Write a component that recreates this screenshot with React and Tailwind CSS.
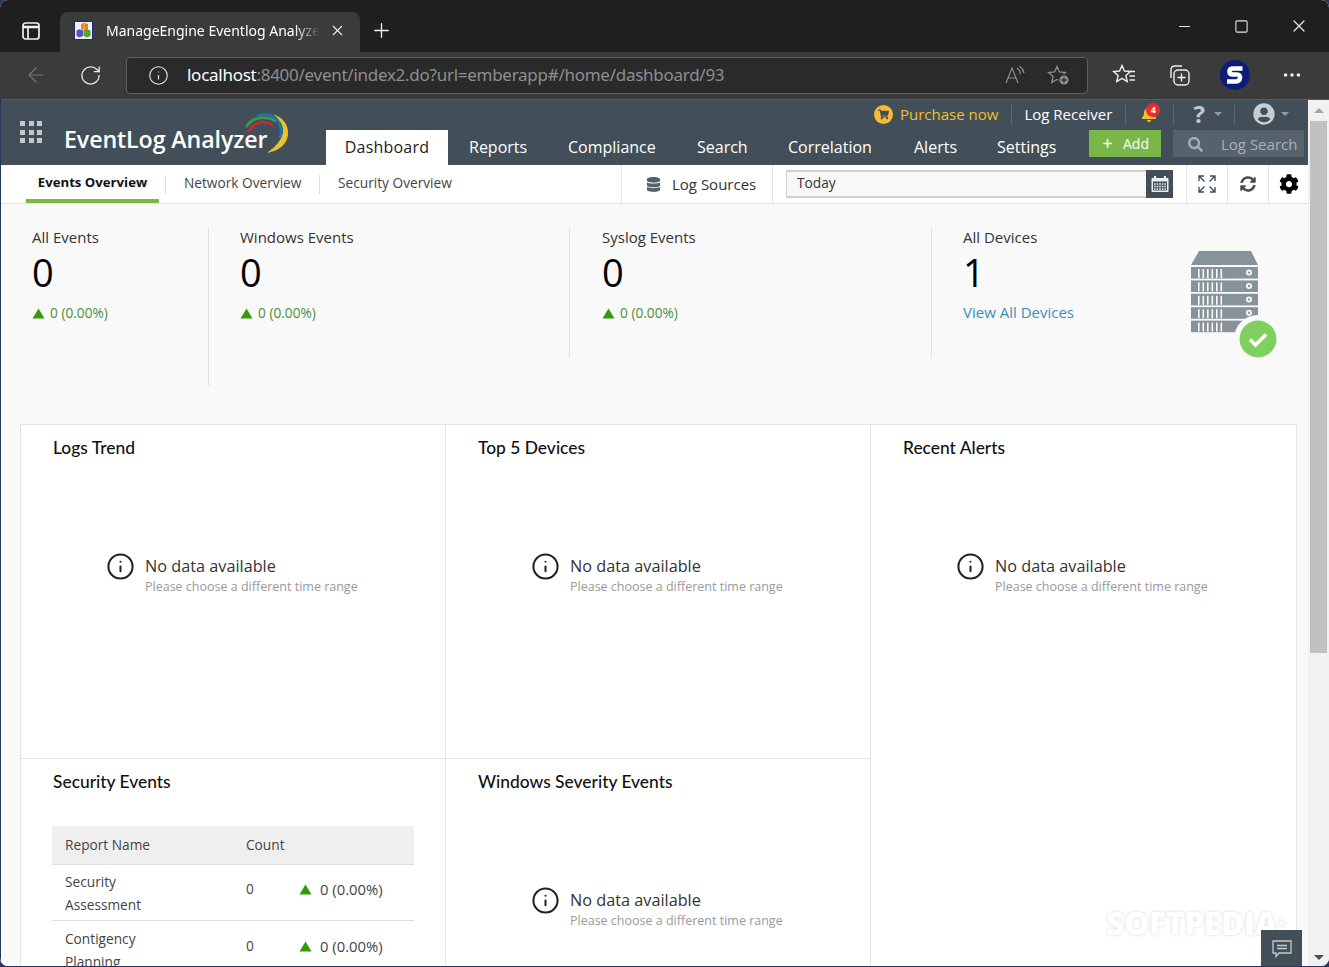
import React from "react";
import { ArrowLeft, RotateCw, Info, X, Plus, Minus, Square, MoreHorizontal } from "lucide-react";
import { FaCog, FaDatabase, FaSyncAlt, FaSearch, FaShoppingCart, FaBell, FaUserCircle } from "react-icons/fa";

const Caret = ({ className = "" }) => (
  <span className={`inline-block w-0 h-0 border-x-[4px] border-x-transparent border-t-[4px] border-t-[#8f9aa2] ${className}`} />
);

const UpTriangle = () => (
  <svg width="13" height="11" viewBox="0 0 13 11" className="shrink-0">
    <path d="M6.5 0.5 L12.5 10.5 L0.5 10.5 Z" fill="#359a0b" />
  </svg>
);

const NoData = ({ className = "" }) => (
  <div className={`flex items-start ${className}`}>
    <Info size={29} strokeWidth={1.7} className="text-[#222] -mt-[1px] -ml-[1px] shrink-0" />
    <div className="ml-[10px] mt-[2px]">
      <div className="text-[16.25px] leading-[22px] text-[#333]">No data available</div>
      <div className="text-[12.5px] leading-[18px] text-[#999] mt-[1px]">Please choose a different time range</div>
    </div>
  </div>
);

const Card = ({ title, className = "", children }) => (
  <div className={`bg-white border-t border-r border-[#e3e3e3] ${className}`}>
    <h3 className="font-['Lato',sans-serif] font-medium text-[17.4px] leading-6 text-[#111] pt-[11px] pl-[32px]">{title}</h3>
    {children}
  </div>
);

function ServerIcon() {
  const rows = [0, 1, 2, 3, 4];
  return (
    <svg width="90" height="112" viewBox="0 0 90 112" className="block">
      <path d="M9 0 H61 L68 14 H1 Z" fill="#87939a" />
      {rows.map((r) => (
        <g key={r}>
          <rect x="1" y={16 + r * 13.4} width="67" height="11.6" fill="#87939a" />
          {[8, 12.5, 17, 21.5, 26, 30.5].map((x) => (
            <rect key={x} x={x} y={18 + r * 13.4} width="1.6" height="9" fill="#f9f9f9" />
          ))}
          <circle cx="59" cy={21.6 + r * 13.4} r="3" fill="#f9f9f9" />
          <circle cx="59" cy={21.6 + r * 13.4} r="1.2" fill="#87939a" />
        </g>
      ))}
      <circle cx="68" cy="88" r="24" fill="#f9f9f9" />
      <circle cx="68" cy="88" r="18.5" fill="#7fd05f" />
      <path d="M60 88.5 L65.5 94 L76 83.5" fill="none" stroke="#fff" strokeWidth="3.6" />
    </svg>
  );
}

const navItems = [
  ["Reports", "w-[99px]"],
  ["Compliance", "w-[129px]"],
  ["Search", "w-[91px]"],
  ["Correlation", "w-[126px]"],
  ["Alerts", "w-[83px]"],
  ["Settings", "w-[92px]"],
];

const starPath = "M10 2.5 L12.4 8 L18.4 8.6 L13.9 12.6 L15.2 18.5 L10 15.4 L4.8 18.5 L6.1 12.6 L1.6 8.6 L7.6 8 Z";

function Browser() {
  return (
    <>
      <div className="h-[52px] bg-[#1f1f1f] flex items-end pl-[60px] relative text-white font-['Noto_Sans',sans-serif]">
        <svg width="18" height="18" viewBox="0 0 18 18" className="absolute left-[22px] top-[22px]">
          <rect x="1" y="1" width="16" height="16" rx="2.5" fill="none" stroke="#f2f2f2" strokeWidth="1.7" />
          <path d="M1 5 H17" stroke="#f2f2f2" strokeWidth="2.5" />
          <path d="M6 5 V17" stroke="#f2f2f2" strokeWidth="1.7" />
        </svg>
        <div className="w-[300px] h-[40px] bg-[#3b3b3b] rounded-t-lg flex items-center pl-[14px] pr-[14px] pb-[3px]">
          <svg width="19" height="19" viewBox="0 0 19 19" className="shrink-0">
            <rect x="0.5" y="0.5" width="18" height="18" fill="#eef1fa" stroke="#1d2f73" />
            <path d="M7 3 L10 1.8 L14 3 V8 L10.5 9.5 L7 8 Z" fill="#ea7d1e" />
            <path d="M10 2 V9" stroke="#f6b26b" />
            <path d="M2.5 9.5 L5.5 8.2 L9 9.5 V15 L5.5 16.5 L2.5 15 Z" fill="#5552bd" />
            <path d="M9.5 9.5 L13 8 L16.5 9.5 V15 L13 16.5 L9.5 15 Z" fill="#58a52d" />
          </svg>
          <span className="ml-[13px] w-[214px] text-[14px] whitespace-nowrap overflow-hidden [mask-image:linear-gradient(to_right,black_88%,transparent)]">ManageEngine Eventlog Analyzer</span>
          <X size={17} strokeWidth={1.6} className="ml-auto text-[#eee]" />
        </div>
        <Plus size={23} strokeWidth={1.4} className="ml-[10px] mb-[10px] text-[#f0f0f0]" />
        <div className="absolute left-[1176px] top-[16px] flex items-center text-[#e6e6e6]">
          <Minus size={17} strokeWidth={1.5} />
          <Square size={15} strokeWidth={1.7} className="ml-[41px]" />
          <X size={20} strokeWidth={1.5} className="ml-[40px]" />
        </div>
      </div>
      <div className="h-[48px] pb-[1px] bg-[#3b3b3b] border-b border-[#5b5b5b] flex items-center pl-[24px] text-[#e8e8e8] font-['Noto_Sans',sans-serif]">
        <ArrowLeft size={24} strokeWidth={1.2} className="text-[#777]" />
        <RotateCw size={23} strokeWidth={1.4} className="ml-[31px]" />
        <div className="ml-[24px] w-[962px] h-[37px] rounded-[4px] border border-[#5f5f5f] bg-[#2a2a2a] flex items-center pl-[21px] pr-[16px] text-[17px]">
          <Info size={21} strokeWidth={1.3} />
          <span className="ml-[18px] tracking-[-0.27px] whitespace-nowrap">
            <span className="text-white">localhost</span>
            <span className="text-[#8e8e8e]">:8400/event/index2.do?url=emberapp#/home/dashboard/93</span>
          </span>
          <span className="ml-auto flex items-center gap-[21px] text-[#8e8e8e]">
            <svg width="21" height="20" viewBox="0 0 21 20" fill="none" stroke="currentColor" strokeWidth="1.2">
              <path d="M1 18 L7 3 L13 18 M3.5 13 H10.5" />
              <path d="M12 3 Q15 5 15.5 9 M14.5 1 Q18 3.5 19 8" />
            </svg>
            <svg width="24" height="22" viewBox="0 0 24 22" fill="none" stroke="currentColor" strokeWidth="1.3">
              <path d={starPath} />
              <circle cx="17" cy="16" r="6" fill="#2a2a2a" stroke="none" />
              <circle cx="17" cy="16" r="4.6" fill="currentColor" stroke="none" />
              <path d="M17 13.5 V18.5 M14.5 16 H19.5" stroke="#2a2a2a" />
            </svg>
          </span>
        </div>
        <div className="ml-[24px] flex items-center">
          <svg width="24" height="24" viewBox="0 0 24 24" fill="none" stroke="#eee" strokeWidth="1.4">
            <path d={starPath} />
            <path d="M16 8.5 H23 M17.5 13 H23 M17.5 17 H23" fill="none" />
          </svg>
          <svg width="24" height="24" viewBox="0 0 24 24" fill="none" stroke="#eee" strokeWidth="1.4" className="ml-[31px]">
            <path d="M4 15 V7 Q4 3 8 3 H15" />
            <rect x="7" y="7" width="15" height="15" rx="4" />
            <path d="M14.5 10.5 V18.5 M10.5 14.5 H18.5" />
          </svg>
          <svg width="30" height="30" viewBox="0 0 30 30" className="ml-[29px]">
            <circle cx="15" cy="15" r="15" fill="#0b1d78" />
            <path d="M22.5 8.5 H13.5 Q9.5 8.5 9.5 11.5 Q9.5 14.5 13 14.5 H17 Q20.5 14.5 20 18 Q19.5 21.5 15.5 21.5 H7" fill="none" stroke="#fff" strokeWidth="4.6" />
          </svg>
          <MoreHorizontal size={22} className="ml-[31px]" />
        </div>
      </div>
    </>
  );
}

function AppHeader() {
  return (
    <div className="h-[65px] bg-[#434f58] flex relative">
      <div className="w-[326px] relative shrink-0">
        <div className="absolute left-[20px] top-[21px] grid grid-cols-3 gap-[3.5px]">
          {[0, 1, 2, 3, 4, 5, 6, 7, 8].map((i) => (
            <span key={i} className="w-[5px] h-[5px] bg-[#c3c8cc]" />
          ))}
        </div>
        <div className="absolute left-[64px] top-[23px] text-white text-[23.2px] leading-8 font-semibold tracking-[-0.1px] whitespace-nowrap">EventLog Analyzer</div>
        <svg width="50" height="42" viewBox="0 0 50 42" className="absolute left-[243px] top-[13px]">
          <path d="M5 19 Q14 4 30 12" fill="none" stroke="#c8273a" strokeWidth="2.6" />
          <path d="M3 14 Q13 -1 33 8" fill="none" stroke="#3c9a4b" strokeWidth="2.8" />
          <path d="M14 3 Q27 -2 36 9 Q40 17 37 25" fill="none" stroke="#1f72b8" strokeWidth="2.8" />
          <path d="M30 1 Q46 7 45 22 Q43 36 24 40 Q38 30 40 20 Q41 9 30 1 Z" fill="#e9c42c" />
        </svg>
      </div>
      <div className="flex-1 flex flex-col">
        <div className="h-[30px] pb-[2px] flex items-center text-[15px] pl-[548px]">
          <span className="w-[19px] h-[19px] rounded-full bg-[#f5bd32] flex items-center justify-center shrink-0">
            <FaShoppingCart size={11} className="text-[#434f58]" />
          </span>
          <span className="ml-[7px] text-[#efc02f] whitespace-nowrap">Purchase now</span>
          <span className="ml-[13px] h-[19px] border-l border-[#5d6972]" />
          <span className="ml-[12px] text-white whitespace-nowrap">Log Receiver</span>
          <span className="ml-[13px] h-[19px] border-l border-[#5d6972]" />
          <span className="ml-[15px] relative">
            <FaBell size={16} className="text-[#efc02f]" />
            <span className="absolute -top-[3px] left-[5px] w-[14px] h-[14px] rounded-full bg-[#ee2b2b] text-white text-[9px] leading-[14px] font-bold text-center">4</span>
          </span>
          <span className="ml-[16px] h-[19px] border-l border-[#5d6972]" />
          <span className="ml-[19px] text-[#c3c9cd] text-[24px] leading-[30px] font-bold">?</span>
          <Caret className="ml-[9px]" />
          <span className="ml-[12px] h-[19px] border-l border-[#5d6972]" />
          <FaUserCircle size={22} className="ml-[18px] text-[#c8cdd1]" />
          <Caret className="ml-[6px]" />
        </div>
        <div className="flex-1 flex items-stretch text-[16px] text-white">
          <div className="w-[122px] bg-white text-[#222] flex items-center justify-center tracking-[0.2px] pb-[2px]">Dashboard</div>
          <div className="flex pl-[21px]">
            {navItems.map(([label, w]) => (
              <div key={label} className={`${w} flex items-center whitespace-nowrap pb-[2px]`}>{label}</div>
            ))}
          </div>
          <div className="flex items-start">
            <button className="w-[72px] h-[27px] bg-[#7ab648] text-white text-[14px] flex items-center justify-center gap-[9px]">
              <Plus size={13} strokeWidth={3} />
              Add
            </button>
            <div className="ml-[12px] w-[131px] h-[27px] bg-[#57636c] text-[#a9b1b7] text-[15px] flex items-center pl-[15px] pt-[1px]">
              <FaSearch size={15} className="text-[#a5adb3]" />
              <span className="ml-[18px] whitespace-nowrap">Log Search</span>
            </div>
          </div>
        </div>
      </div>
    </div>
  );
}

function SubNav() {
  return (
    <div className="h-[39px] bg-white border-b border-[#e5e5e5] flex items-stretch text-[13.7px] text-[#444]">
      <div className="ml-[26px] w-[133px] h-[38px] border-b-4 border-[#7ab648] text-[13.2px] font-bold text-[#111] flex items-center justify-center pt-[1px]">Events Overview</div>
      <div className="flex items-center">
        <span className="ml-[6px] h-[19px] border-l border-[#ddd]" />
        <span className="ml-[18px] w-[135px] whitespace-nowrap pb-[1px]">Network Overview</span>
        <span className="h-[19px] border-l border-[#ddd]" />
        <span className="ml-[18px] w-[283px] whitespace-nowrap pb-[1px]">Security Overview</span>
      </div>
      <div className="border-l border-[#e5e5e5] w-[151px] flex items-center pl-[24px] text-[15px] text-[#333]">
        <FaDatabase size={15} className="text-[#55616a]" />
        <span className="ml-[11px] whitespace-nowrap">Log Sources</span>
      </div>
      <div className="border-l border-[#e5e5e5] pl-[13px] w-[414px] flex items-center">
        <div className="w-[360px] h-[28px] bg-[#f8f8f8] border-t-2 border-b-2 border-l border-[#d0d0d0] flex items-center pl-[10px] pb-[2px] text-[13.7px] text-[#333]">Today</div>
        <div className="w-[27px] h-[28px] bg-[#434f58] flex items-center justify-center">
          <svg width="18" height="18" viewBox="0 0 18 18" fill="none">
            <rect x="0.5" y="3" width="17" height="14" rx="1" fill="#eef0f1" />
            <rect x="2" y="6.5" width="14" height="9" fill="#434f58" />
            <path d="M4 1 V4.5 M14 1 V4.5" stroke="#eef0f1" strokeWidth="2" />
            <path d="M3 9 H15 M3 11.5 H15 M3 14 H15" stroke="#eef0f1" strokeWidth="1.3" strokeDasharray="1.6 1" />
          </svg>
        </div>
      </div>
      <div className="border-l border-[#e5e5e5] w-[41px] flex items-center justify-center">
        <svg width="20" height="20" viewBox="0 0 20 20" fill="none" stroke="#434f58" strokeWidth="1.4">
          <path d="M2 7 V2 H7 M2 2 L7.5 7.5 M18 7 V2 H13 M18 2 L12.5 7.5 M2 13 V18 H7 M2 18 L7.5 12.5 M18 13 V18 H13 M18 18 L12.5 12.5" />
        </svg>
      </div>
      <div className="border-l border-[#e5e5e5] w-[41px] flex items-center justify-center">
        <FaSyncAlt size={16} className="text-[#434f58]" />
      </div>
      <div className="border-l border-[#e5e5e5] w-[40px] flex items-center justify-center">
        <FaCog size={20} className="text-black" />
      </div>
    </div>
  );
}

function StatBody({ title }) {
  return (
    <>
      <div className="text-[15px] leading-5 text-[#333] -mt-[1px]">{title}</div>
      <div className="text-[38px] leading-[44px] text-black mt-[3px]">0</div>
      <div className="flex items-center gap-[5px] text-[13.7px] text-[#4d8f3a] mt-[9px] h-5">
        <UpTriangle />
        <span>0 (0.00%)</span>
      </div>
    </>
  );
}

function Stats() {
  return (
    <div className="h-[220px] bg-[#f9f9f9] pt-[24px] flex items-start">
      <div className="w-[209px] h-[158px] border-r border-[#e2e2e2] pl-[32px]">
        <StatBody title="All Events" />
      </div>
      <div className="w-[361px] h-[130px] border-r border-[#e2e2e2] pl-[31px]">
        <StatBody title="Windows Events" />
      </div>
      <div className="w-[362px] h-[130px] border-r border-[#e2e2e2] pl-[32px]">
        <StatBody title="Syslog Events" />
      </div>
      <div className="pl-[31px] w-[258px]">
        <div className="text-[15px] leading-5 text-[#333] -mt-[1px]">All Devices</div>
        <div className="text-[38px] leading-[44px] text-black mt-[3px]">1</div>
        <div className="text-[15px] leading-5 text-[#3b8dbd] mt-[8px]">View All Devices</div>
      </div>
      <div className="mt-[23px]">
        <ServerIcon />
      </div>
    </div>
  );
}

function SecurityTable() {
  const rows = [
    ["Security", "Assessment", ""],
    ["Contigency", "Planning", "pt-[2px]"],
  ];
  return (
    <div className="ml-[31px] mt-[32px] w-[362px] text-[13.7px] text-[#444]">
      <div className="h-[39px] bg-[#efefef] border-b border-[#dedede] flex items-center">
        <span className="ml-[13px] w-[181px]">Report Name</span>
        <span>Count</span>
      </div>
      {rows.map((r) => (
        <div key={r[0]} className={`h-[56px] border-b border-[#dedede] flex items-center ${r[2]}`}>
          <div className="ml-[13px] w-[181px] leading-[23px]">
            {r[0]}
            <br />
            {r[1]}
          </div>
          <div className="w-[53px] mb-[6px]">0</div>
          <div className="flex items-center mb-[6px]">
            <UpTriangle />
            <span className="ml-[8px] text-[14.8px]">0 (0.00%)</span>
          </div>
        </div>
      ))}
    </div>
  );
}

function Cards() {
  return (
    <div className="bg-[#f9f9f9] pl-[20px]">
      <div className="grid grid-cols-[425px_425px_426px] grid-rows-[334px_auto] border-l border-[#e3e3e3] w-[1277px]">
        <Card title="Logs Trend"><NoData className="ml-[86px] mt-[93px]" /></Card>
        <Card title="Top 5 Devices"><NoData className="ml-[86px] mt-[93px]" /></Card>
        <Card title="Recent Alerts" className="row-span-2"><NoData className="ml-[86px] mt-[93px]" /></Card>
        <Card title="Security Events" className="h-[300px]"><SecurityTable /></Card>
        <Card title="Windows Severity Events" className="h-[300px]"><NoData className="ml-[86px] mt-[93px]" /></Card>
      </div>
    </div>
  );
}

export default function App() {
  return (
    <div className="w-[1329px] h-[967px] bg-[#27365c] overflow-hidden font-['Open_Sans',sans-serif]">
      <div className="relative w-[1329px] h-[966px] rounded-[8px] overflow-hidden bg-white">
        <Browser />
        <div className="flex h-[866px]">
          <div className="w-[1308px] overflow-hidden">
            <AppHeader />
            <SubNav />
            <Stats />
            <Cards />
          </div>
          <div className="w-[21px] bg-[#f1f1f1] flex flex-col items-center">
            <div className="h-[21px] flex items-center justify-center">
              <span className="w-0 h-0 border-x-[5px] border-x-transparent border-b-[5px] border-b-[#a3a3a3]" />
            </div>
            <div className="w-[17px] h-[532px] bg-[#c1c1c1]" />
            <div className="mt-auto h-[18px] flex items-center justify-center">
              <span className="w-0 h-0 border-x-[5px] border-x-transparent border-t-[5px] border-t-[#505050]" />
            </div>
          </div>
        </div>
        <div className="absolute left-0 top-[99px] bottom-0 w-[1px] bg-[#27365c]" />
        <div className="absolute left-[1106px] top-[905px] text-[32px] leading-9 font-black text-white [text-shadow:0_0_3px_rgba(0,0,0,0.18)] tracking-[-0.5px] whitespace-nowrap">
          SOFTPEDIA<span className="text-[10px] align-top">®</span>
        </div>
        <div className="absolute left-[1261px] top-[930px] w-[41px] h-[36px] pt-[1px] bg-[#434f58] flex items-center justify-center">
          <svg width="20" height="18" viewBox="0 0 20 18" fill="none" stroke="#c5cacd" strokeWidth="1.3">
            <path d="M1 1 H19 V13 H7 L4 16.5 V13 H1 Z" />
            <path d="M5 5.5 H15 M5 8.5 H15" strokeWidth="1.5" />
          </svg>
        </div>
      </div>
    </div>
  );
}
